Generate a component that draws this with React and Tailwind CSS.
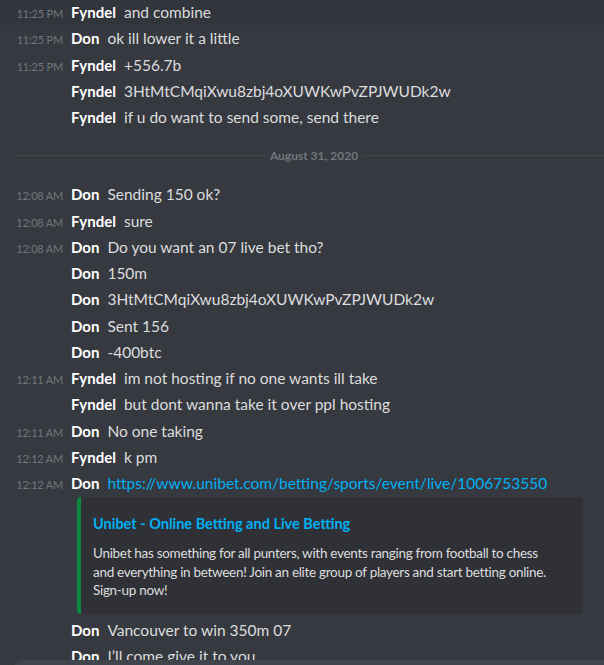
const messages = [
  { time: '11:25 PM', name: 'Fyndel', text: 'and combine', hover: true },
  { time: '11:25 PM', name: 'Don', text: 'ok ill lower it a little' },
  { time: '11:25 PM', name: 'Fyndel', text: '+556.7b' },
  { name: 'Fyndel', text: '3HtMtCMqiXwu8zbj4oXUWKwPvZPJWUDk2w' },
  { name: 'Fyndel', text: 'if u do want to send some, send there' },
]

const messages2 = [
  { time: '12:08 AM', name: 'Don', text: 'Sending 150 ok?' },
  { time: '12:08 AM', name: 'Fyndel', text: 'sure' },
  { time: '12:08 AM', name: 'Don', text: 'Do you want an 07 live bet tho?' },
  { name: 'Don', text: '150m' },
  { name: 'Don', text: '3HtMtCMqiXwu8zbj4oXUWKwPvZPJWUDk2w' },
  { name: 'Don', text: 'Sent 156' },
  { name: 'Don', text: '-400btc' },
  { time: '12:11 AM', name: 'Fyndel', text: 'im not hosting if no one wants ill take' },
  { name: 'Fyndel', text: 'but dont wanna take it over ppl hosting' },
  { time: '12:11 AM', name: 'Don', text: 'No one taking' },
  { time: '12:12 AM', name: 'Fyndel', text: 'k pm' },
  { time: '12:12 AM', name: 'Don', text: 'https://www.unibet.com/betting/sports/event/live/1006753550', link: true },
]

const messages3 = [
  { name: 'Don', text: 'Vancouver to win 350m 07' },
  { name: 'Don', text: 'I’ll come give it to you' },
]

function Row({ m }) {
  return (
    <div className={`flex items-baseline h-[26.25px] pt-[2px] leading-[22px] ${m.hover ? 'bg-[#32353b]' : ''}`}>
      <span className="w-[63px] shrink-0 text-right text-[11px] tracking-[-0.2px] text-[#72767d]">{m.time || ''}</span>
      <span className="ml-[8px] text-[15px] font-bold text-white">{m.name}</span>
      <span className={`ml-[8px] text-[15.5px] whitespace-nowrap ${m.link ? 'text-[#00b0f4]' : 'text-[#dcddde]'}`}>{m.text}</span>
    </div>
  )
}

export default function App() {
  return (
    <div className="relative w-[604px] h-[665px] overflow-hidden bg-[#36393f]" style={{ fontFamily: 'Lato, "Open Sans", sans-serif' }}>
      <div className="-mt-[1px]">
        {messages.map((m, i) => <Row key={i} m={m} />)}

        {/* date divider */}
        <div className="flex items-center pl-[12px] -mr-[12px] h-[51px]">
          <div className="flex-1 h-px bg-[#42454a]" />
          <span className="px-[4px] text-[12px] font-bold text-[#72767d]">August 31, 2020</span>
          <div className="flex-1 h-px bg-[#42454a]" />
        </div>

        {messages2.map((m, i) => <Row key={i} m={m} />)}

        {/* embed */}
        <div className="pl-[77px] pr-[21px] pt-[1px] pb-[3px]">
          <div className="flex rounded-[4px] bg-[#2f3136] overflow-hidden">
            <div className="w-[4px] shrink-0 bg-[#0b8a3d]" />
            <div className="pl-[12px] pr-[24px] pt-[17px] pb-[14px]">
              <div className="text-[14.5px] font-bold text-[#00b0f4] leading-[20px]">Unibet - Online Betting and Live Betting</div>
              <div className="mt-[10px] text-[13.5px] tracking-[-0.3px] leading-[18.5px] text-[#dcddde]">
                Unibet has something for all punters, with events ranging from football to chess and everything in between! Join an elite group of players and start betting online. Sign-up now!
              </div>
            </div>
          </div>
        </div>

        {messages3.map((m, i) => <Row key={i} m={m} />)}
      </div>

      {/* input bar */}
      <div className="absolute left-[14px] right-0 top-[660px] h-[40px] rounded-tl-[8px] bg-[#40444b]" />
    </div>
  )
}
